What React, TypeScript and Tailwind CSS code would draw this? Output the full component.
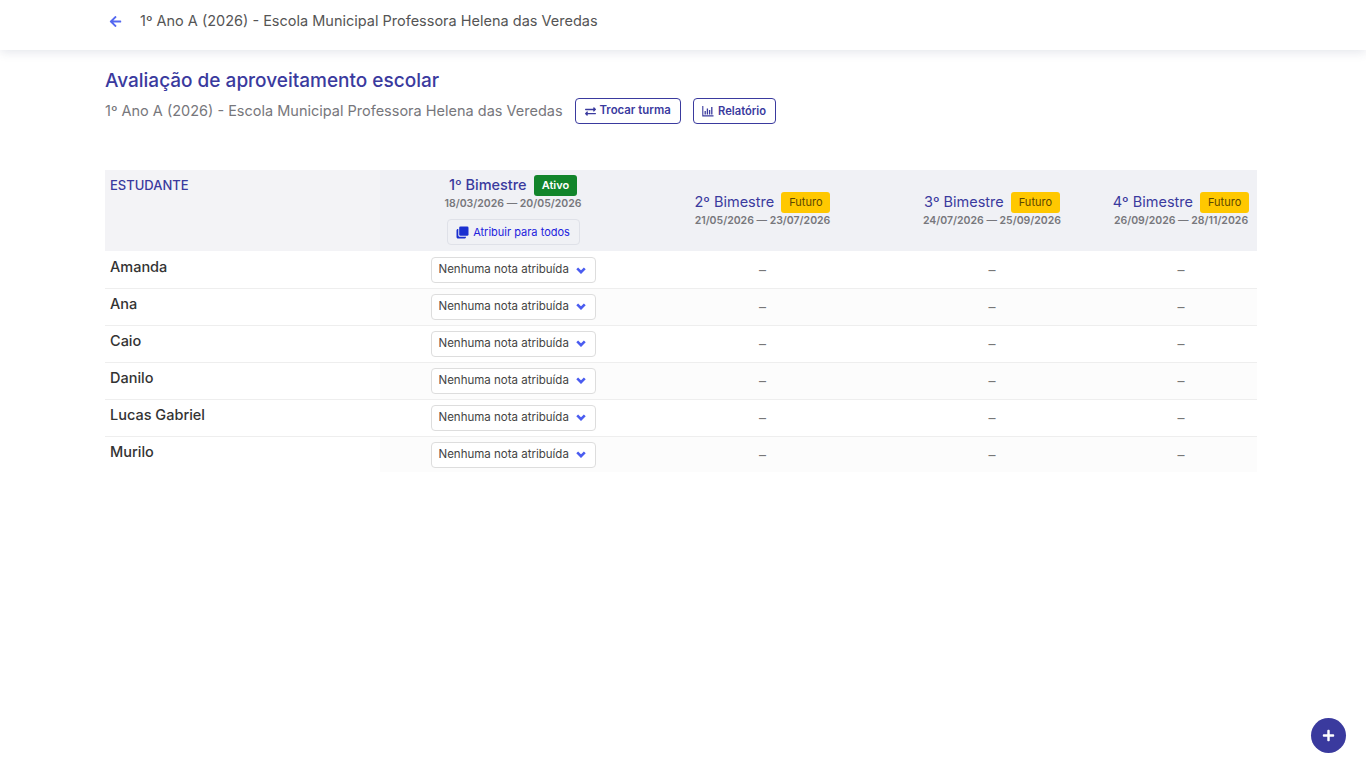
import { FaArrowLeft, FaExchangeAlt, FaPlus } from 'react-icons/fa';

const students = ['Amanda', 'Ana', 'Caio', 'Danilo', 'Lucas Gabriel', 'Murilo'];

const terms = [
  { name: '2º Bimestre', dates: '21/05/2026 — 23/07/2026', width: 'w-[233px]' },
  { name: '3º Bimestre', dates: '24/07/2026 — 25/09/2026', width: 'w-[226px]' },
  { name: '4º Bimestre', dates: '26/09/2026 — 28/11/2026', width: 'w-[152px]' },
];

const ChartIcon = () => (
  <svg viewBox="0 0 12 12" className="h-[12px] w-[12px]" fill="none" stroke="currentColor" strokeWidth="1.1">
    <path d="M0.8 1v9.9h10.7" />
    <path d="M3.2 9.5V6M5.4 9.5V3.5M7.6 9.5V5M9.8 9.5V2" strokeWidth="1.3" />
  </svg>
);

const CopyIcon = () => (
  <svg viewBox="0 0 13 13" className="h-[13px] w-[13px]" fill="#1a2fd0">
    <rect x="3.2" y="0.5" width="9.3" height="9.3" rx="1.3" />
    <path d="M2 3h0.3v6.2c0 0.9 0.6 1.5 1.5 1.5H10V11c0 0.9-0.6 1.5-1.5 1.5H2c-0.9 0-1.5-0.6-1.5-1.5V4.5C0.5 3.6 1.1 3 2 3z" />
  </svg>
);

const ChevronIcon = () => (
  <svg viewBox="0 0 10 7" className="h-[7px] w-[10px]" fill="none" stroke="#4a5cf0" strokeWidth="2.6">
    <path d="M1.2 1.4L5 5.2l3.8-3.8" />
  </svg>
);

const App = () => {
  return (
    <div className="relative h-[768px] overflow-hidden bg-white font-['Inter',sans-serif]">
      {/* Top bar */}
      <div className="flex h-[50px] items-center pb-[8px] pl-[109px] shadow-[0_2px_10px_rgba(60,70,110,0.14)]">
        <FaArrowLeft className="h-[13px] w-[13px] text-[#5468f0]" />
        <span className="ml-[18px] text-[14.5px] text-[#555555]">1º Ano A (2026) - Escola Municipal Professora Helena das Veredas</span>
      </div>

      <div className="pl-[105px] pr-[109px] pt-[19px]">
        <h1 className="text-[19px] font-medium leading-[24px] text-[#3a3a9e]">Avaliação de aproveitamento escolar</h1>
        <div className="mt-[5px] flex items-center">
          <span className="pb-[1px] text-[14.5px] text-[#77777c]">1º Ano A (2026) - Escola Municipal Professora Helena das Veredas</span>
          <button className="ml-[12px] flex h-[26px] w-[106px] items-center justify-center gap-[4px] rounded-[4px] border border-[#3a3a9e] text-[11.4px] font-semibold text-[#3a3a9e]">
            <FaExchangeAlt className="h-[11px] w-[11px]" />
            Trocar turma
          </button>
          <button className="ml-[12px] flex h-[26px] w-[83px] items-center justify-center gap-[4px] rounded-[4px] border border-[#3a3a9e] text-[11.2px] font-semibold text-[#3a3a9e]">
            <ChartIcon />
            Relatório
          </button>
        </div>

        <table className="mt-[46px] w-[1152px] table-fixed border-collapse">
          <thead>
            <tr className="h-[81px] bg-[#f0f1f5]">
              <th className="w-[275px] bg-[#f3f3f6] pl-[5px] pt-[7px] text-left align-top text-[13px] font-medium leading-[16px] text-[#3a3a9e]">ESTUDANTE</th>
              <th className="w-[266px] pt-[5px] align-top font-normal">
                <div className="flex items-center justify-center gap-[7px]">
                  <span className="pb-[2px] text-[14.5px] font-medium leading-[19px] text-[#3a3a9e]">1º Bimestre</span>
                  <span className="flex h-[21px] items-center rounded-[3px] bg-[#12852b] px-[8px] text-[11px] font-semibold text-white">Ativo</span>
                </div>
                <div className="mt-[1px] text-[10.5px] font-semibold leading-[14px] text-[#77777c]">18/03/2026 — 20/05/2026</div>
                <button className="mx-auto mt-[8px] flex h-[26px] w-[133px] items-center justify-center gap-[4px] rounded-[4px] border border-[#dfe1e8] text-[11px] text-[#2222dd]">
                  <CopyIcon />
                  Atribuir para todos
                </button>
              </th>
              {terms.map((term) => (
                <th key={term.name} className={`${term.width} pt-[22px] align-top font-normal`}>
                  <div className="flex items-center justify-center gap-[7px]">
                    <span className="pb-[2px] text-[14.5px] leading-[19px] text-[#3a3a9e]">{term.name}</span>
                    <span className="flex h-[21px] items-center rounded-[3px] bg-[#ffc800] px-[8px] text-[11px] text-[#5c4600]">Futuro</span>
                  </div>
                  <div className="mt-[1px] text-[10.5px] font-semibold leading-[14px] text-[#77777c]">{term.dates}</div>
                </th>
              ))}
            </tr>
          </thead>
          <tbody>
            {students.map((student, i) => (
              <tr key={student} className={`${i < students.length - 1 ? 'h-[37px] border-b border-[#eeeeee]' : 'h-[36px]'} ${i % 2 === 1 ? 'bg-[#fcfcfc]' : 'bg-white'}`}>
                <td className={`${i === 0 ? 'pt-[6px]' : 'pt-[5px]'} bg-white pl-[5px] align-top text-[14.5px] font-medium leading-[20px] text-[#333333]`}>{student}</td>
                <td className={`${i === 0 ? 'pt-[6px]' : 'pt-[5px]'} align-top`}>
                  <div className="mx-auto flex h-[26px] w-[165px] items-center justify-between rounded-[4px] border border-[#dddddd] bg-white pl-[7px] pr-[9px] text-[11.5px] text-[#444444]">
                    Nenhuma nota atribuída
                    <ChevronIcon />
                  </div>
                </td>
                {terms.map((term) => (
                  <td key={term.name} className={`${i === 0 ? 'pt-[6px]' : 'pt-[5px]'} align-top text-center text-[14px] leading-[26px] text-[#777777]`}>–</td>
                ))}
              </tr>
            ))}
          </tbody>
        </table>
      </div>

      <button className="absolute left-[1311px] top-[718px] flex h-[35px] w-[35px] items-center justify-center rounded-full bg-[#3a3a9e] text-white">
        <FaPlus className="h-[13px] w-[13px]" />
      </button>
    </div>
  );
};

export default App;
